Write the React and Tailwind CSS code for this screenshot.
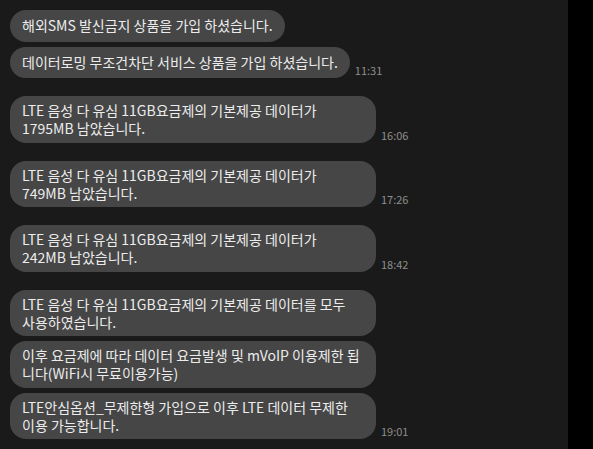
import React from 'react';

const groups = [
    {
        time: '11:31',
        messages: [
            ['해외SMS 발신금지 상품을 가입 하셨습니다.'],
            ['데이터로밍 무조건차단 서비스 상품을 가입 하셨습니다.'],
        ],
    },
    {
        time: '16:06',
        messages: [['LTE 음성 다 유심 11GB요금제의 기본제공 데이터가', '1795MB 남았습니다.']],
    },
    {
        time: '17:26',
        messages: [['LTE 음성 다 유심 11GB요금제의 기본제공 데이터가', '749MB 남았습니다.']],
    },
    {
        time: '18:42',
        messages: [['LTE 음성 다 유심 11GB요금제의 기본제공 데이터가', '242MB 남았습니다.']],
    },
    {
        time: '19:01',
        messages: [
            ['LTE 음성 다 유심 11GB요금제의 기본제공 데이터를 모두', '사용하였습니다.'],
            ['이후 요금제에 따라 데이터 요금발생 및 mVoIP 이용제한 됩', '니다(WiFi시 무료이용가능)'],
            ['LTE안심옵션_무제한형 가입으로 이후 LTE 데이터 무제한', '이용 가능합니다.'],
        ],
    },
];

const Bubble = ({ lines }) => {
    const multi = lines.length > 1;
    return (
        <div
            className={
                multi
                    ? 'w-[366px] rounded-[16px] bg-[#464646] px-3 py-[5px] leading-[18.25px]'
                    : 'rounded-full bg-[#464646] px-3 py-[6px] leading-[19.5px]'
            }
        >
            {lines.map((line, i) => (
                <div key={i} className="whitespace-nowrap">
                    {line}
                </div>
            ))}
        </div>
    );
};

const App = () => {
    return (
        <div className="flex h-[449px] w-[593px] bg-black">
            <div
                className="flex w-[568px] flex-col gap-[18px] bg-[#1a1a1a] pl-[10px] pt-[10px] text-[14px] text-[#ececec]"
                style={{ fontFamily: '"Noto Sans CJK KR", "Noto Sans", sans-serif' }}
            >
                {groups.map((group) => (
                    <div key={group.time} className="flex flex-col gap-[5px]">
                        {group.messages.map((lines, i) => {
                            const last = i === group.messages.length - 1;
                            return (
                                <div key={i} className="flex items-end">
                                    <Bubble lines={lines} />
                                    {last && (
                                        <span className="mb-[1px] ml-[5px] text-[11px] leading-[14px] text-[#8e8e8e]">
                                            {group.time}
                                        </span>
                                    )}
                                </div>
                            );
                        })}
                    </div>
                ))}
            </div>
        </div>
    );
};

export default App;
